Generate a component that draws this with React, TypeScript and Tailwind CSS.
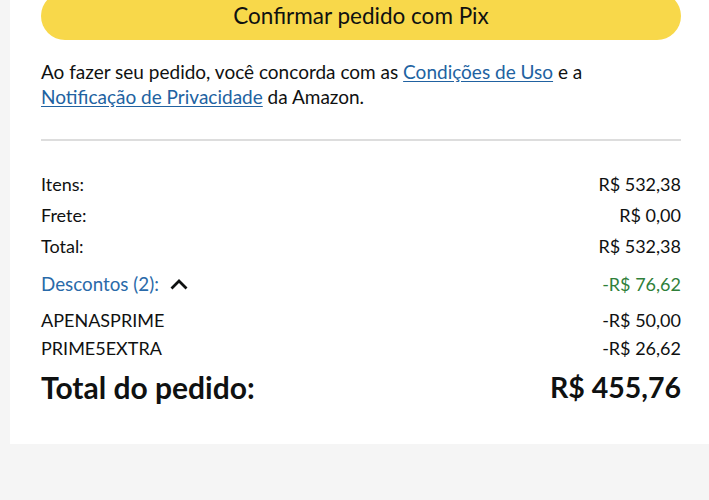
export default function App() {
  const rows = [
    { label: 'Itens:', value: 'R$ 532,38' },
    { label: 'Frete:', value: 'R$ 0,00' },
    { label: 'Total:', value: 'R$ 532,38' },
  ];
  const codes = [
    { label: 'APENASPRIME', value: '-R$ 50,00' },
    { label: 'PRIME5EXTRA', value: '-R$ 26,62' },
  ];

  return (
    <div
      className="min-h-screen w-full overflow-hidden bg-[#f5f5f5] text-[#0f1111]"
      style={{ fontFamily: 'Lato, "Open Sans", Arial, sans-serif' }}
    >
      <div className="ml-[10px] bg-white pb-[40px] pl-[31px] pr-[28px]">
        {/* Place order button */}
        <button className="-mt-[8px] flex h-[48px] w-full items-center justify-center rounded-full bg-[#f8d84a] text-[22.5px] text-[#0f1111]">
          Confirmar pedido com Pix
        </button>

        <p className="mt-[19px] text-[19px] leading-[25px]">
          Ao fazer seu pedido, você concorda com as{' '}
          <a className="text-[#2162a1] underline underline-offset-2">Condições de Uso</a> e a{' '}
          <a className="text-[#2162a1] underline underline-offset-2">Notificação de Privacidade</a> da Amazon.
        </p>

        <div className="mt-[30px] h-[2px] bg-[#dddddd]" />

        {/* Summary */}
        <div className="mt-[31px] flex flex-col gap-[7px] text-[18px] leading-[24px]">
          {rows.map((r) => (
            <div key={r.label} className="flex items-center justify-between">
              <span>{r.label}</span>
              <span>{r.value}</span>
            </div>
          ))}
        </div>

        <div className="mt-[14px] flex items-center justify-between text-[18px] leading-[24px]">
          <div className="flex items-center gap-[10px] text-[#2a6aa9]">
            <span className="text-[18.8px]">Descontos (2):</span>
            <svg width="20" height="12" viewBox="0 0 20 12" fill="none">
              <path d="M2.5 10.5 L10 3 L17.5 10.5" stroke="#0f1111" strokeWidth="2.8" />
            </svg>
          </div>
          <span className="text-[#2f7f3a]">-R$ 76,62</span>
        </div>

        <div className="mt-[12px] flex flex-col gap-[4px] text-[18px] leading-[24px]">
          {codes.map((c) => (
            <div key={c.label} className="flex items-center justify-between">
              <span>{c.label}</span>
              <span>{c.value}</span>
            </div>
          ))}
        </div>

        <div className="mt-[10px] flex items-center justify-between font-bold leading-[34px]">
          <span className="text-[30px]">Total do pedido:</span>
          <span className="text-[28.5px]">R$ 455,76</span>
        </div>
      </div>
    </div>
  );
}
